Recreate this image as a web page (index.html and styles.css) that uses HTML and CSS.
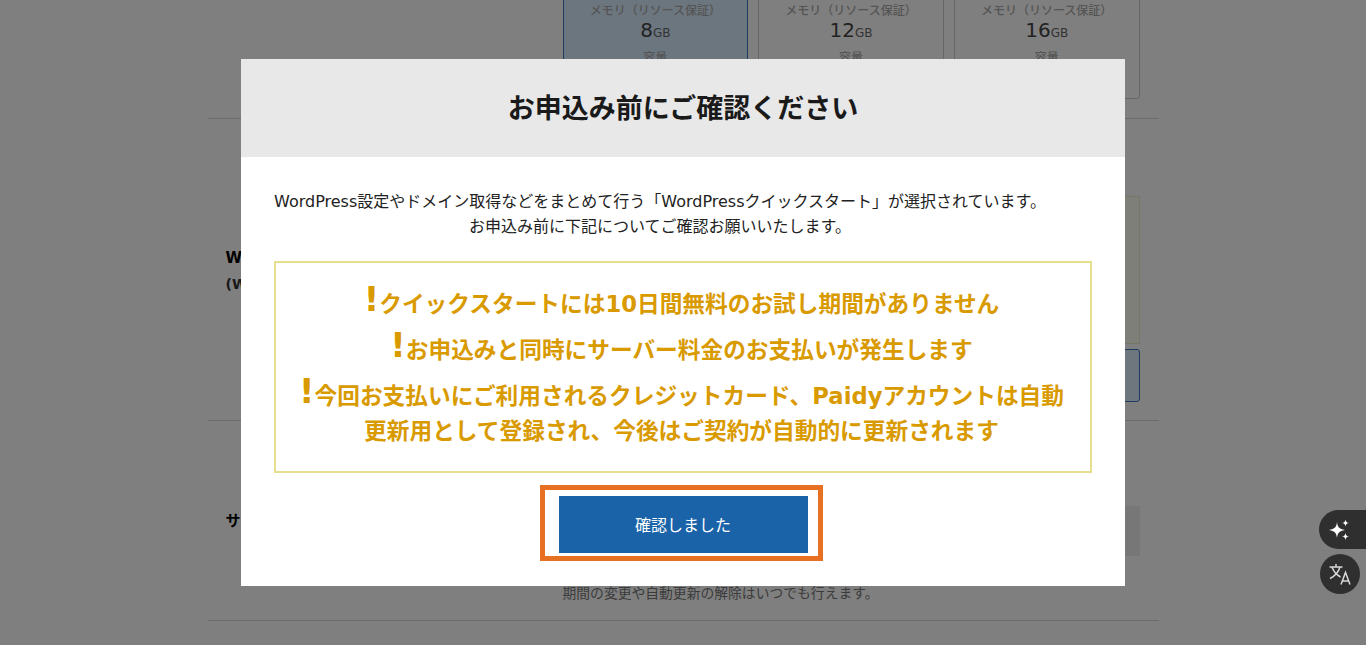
FILE: index.html
```html
<!DOCTYPE html>
<html lang="ja">
  <head>
    <meta charset="UTF-8" />
    <meta name="viewport" content="width=device-width, initial-scale=1.0" />
    <title>お申込み前にご確認ください</title>
    <link rel="stylesheet" href="styles.css">
  </head>
  <body>
    <div class="page">
      <div class="form-row plan-row">
        <div class="row-label"></div>
        <div class="row-field plan-list">
          <div class="plan-card selected">
            <p class="spec-name">メモリ（リソース保証）</p>
            <p class="spec-value">8<small>GB</small></p>
            <p class="spec-name">容量</p>
          </div>
          <div class="plan-card">
            <p class="spec-name">メモリ（リソース保証）</p>
            <p class="spec-value">12<small>GB</small></p>
            <p class="spec-name">容量</p>
          </div>
          <div class="plan-card">
            <p class="spec-name">メモリ（リソース保証）</p>
            <p class="spec-value">16<small>GB</small></p>
            <p class="spec-name">容量</p>
          </div>
        </div>
      </div>

      <div class="form-row quickstart-row">
        <div class="row-label">
          <p>WordPress</p>
          <p class="label-sub">(WordPress)</p>
        </div>
        <div class="row-field">
          <div class="note-box"></div>
          <div class="choice-box"></div>
        </div>
      </div>

      <div class="form-row term-row">
        <div class="row-label">
          <p>サーバーの契約期間</p>
        </div>
        <div class="row-field">
          <div class="select-box"></div>
          <p class="term-note">期間の変更や自動更新の解除はいつでも行えます。</p>
        </div>
      </div>
    </div>

    <div class="overlay">
      <div class="modal">
        <div class="modal-header">
          <h1>お申込み前にご確認ください</h1>
        </div>
        <div class="modal-body">
          <p class="modal-lead">
            WordPress設定やドメイン取得などをまとめて行う「WordPressクイックスタート」が選択されています。<br />
            お申込み前に下記についてご確認お願いいたします。
          </p>
          <div class="alert-box">
            <p><span class="mark">!</span>クイックスタートには10日間無料のお試し期間がありません</p>
            <p><span class="mark">!</span>お申込みと同時にサーバー料金のお支払いが発生します</p>
            <p><span class="mark">!</span>今回お支払いにご利用されるクレジットカード、Paidyアカウントは自動<br />更新用として登録され、今後はご契約が自動的に更新されます</p>
          </div>
          <div class="confirm-frame">
            <button type="button" class="confirm-button">確認しました</button>
          </div>
        </div>
      </div>
    </div>

    <div class="float-tools">
      <div class="tool-pill">
        <svg width="26" height="26" viewBox="0 0 26 26" fill="#fff">
          <path d="M11 5 C11.6 10 13 12 19 13 C13 14 11.6 16 11 21 C10.4 16 9 14 3 13 C9 12 10.4 10 11 5 Z" />
          <path d="M19.5 2.5 C19.9 5 20.6 5.6 23.2 6 C20.6 6.4 19.9 7 19.5 9.5 C19.1 7 18.4 6.4 15.8 6 C18.4 5.6 19.1 5 19.5 2.5 Z" />
          <path d="M19.5 16 C19.9 18.5 20.6 19.1 23.2 19.5 C20.6 19.9 19.9 20.5 19.5 23 C19.1 20.5 18.4 19.9 15.8 19.5 C18.4 19.1 19.1 18.5 19.5 16 Z" />
        </svg>
      </div>
      <div class="tool-circle">
        <svg width="24" height="24" viewBox="0 0 24 24" fill="none" stroke="#d8d8d8" stroke-width="1.5">
          <path d="M1.5 5 H14.5 M8 2 V5 M12 5 C10.5 10 7 14 2 16.5 M4 5 C5.5 9.5 9 13 12.5 15" />
          <path d="M13 22.5 L17.5 10.5 L22 22.5 M14.5 19 H20.5" />
        </svg>
      </div>
    </div>
  </body>
</html>
```

FILE: styles.css
```css
* {
  margin: 0;
  padding: 0;
  box-sizing: border-box;
  font-family: "DejaVu Sans", "Noto Sans CJK JP", sans-serif;
}

body {
  height: 100vh;
  background: #fff;
  overflow: hidden;
}

.page {
  width: 951px;
  margin: -30px auto 0;
}

.form-row {
  display: grid;
  grid-template-columns: 355px 1fr;
  padding: 0 19px 0 18px;
  border-bottom: 1px solid #d8d8d8;
}

.row-label {
  align-self: center;
  font-size: 15px;
  font-weight: 700;
  line-height: 26px;
  color: #000;
  white-space: nowrap;
}

.label-sub {
  font-size: 14px;
  color: #333;
}

.row-field {
  margin-left: -18px;
}

.plan-row {
  height: 149px;
  padding-top: 20px;
}

.plan-list {
  display: grid;
  grid-template-columns: repeat(3, 1fr);
  gap: 10px;
  height: 109px;
}

.plan-card {
  padding-top: 12px;
  text-align: center;
  background: #fff;
  border: 1px solid #ccc;
  border-radius: 3px;
}

.plan-card.selected {
  background: #d9ecff;
  border-color: #3a78c0;
}

.spec-name {
  font-size: 12px;
  line-height: 16px;
  font-weight: 500;
  color: #aaa;
}

.spec-value {
  margin: -1px 0 5px;
  font-size: 20px;
  line-height: 24px;
  color: #444;
}

.spec-value small {
  font-size: 12px;
  color: #666;
}

.quickstart-row {
  height: 302px;
  padding-top: 77px;
}

.quickstart-row .row-label {
  margin-top: -75px;
}

.note-box {
  height: 148px;
  background: #fffff2;
  border: 1px solid #eeeed0;
}

.choice-box {
  height: 53px;
  margin-top: 5px;
  background: #dcecfc;
  border: 1px solid #3a78c0;
  border-radius: 3px;
}

.term-row {
  height: 200px;
  padding-top: 85px;
}

.term-row .row-label {
  margin-top: -85px;
}

.select-box {
  height: 50px;
  background: #eee;
}

.term-note {
  margin-top: 27px;
  font-size: 13.8px;
  line-height: 20px;
  color: #777;
}

.overlay {
  position: fixed;
  inset: 0;
  display: flex;
  justify-content: center;
  align-items: flex-start;
  padding-top: 59px;
  background: rgba(0, 0, 0, 0.5);
}

.modal {
  width: 884px;
  height: 527px;
  background: #fff;
}

.modal-header {
  display: flex;
  align-items: center;
  justify-content: center;
  height: 98px;
  padding-bottom: 4px;
  background: #e8e8e8;
}

.modal-header h1 {
  font-size: 27px;
  font-weight: 700;
  color: #1a1a1a;
}

.modal-body {
  padding: 32px 33px 0;
}

.modal-lead {
  margin-right: 46px;
  font-size: 16px;
  line-height: 25px;
  text-align: center;
  color: #222;
  white-space: nowrap;
}

.alert-box {
  display: flex;
  flex-direction: column;
  gap: 11px;
  height: 212px;
  margin: 22px 0 12px;
  padding: 24px 3px 0 0;
  border: 2px solid #e6e08e;
  font-size: 22.7px;
  font-weight: 700;
  line-height: 35px;
  text-align: center;
  color: #d99a00;
  white-space: nowrap;
}

.mark {
  font-size: 34px;
  line-height: 0;
  vertical-align: 1px;
}

.confirm-frame {
  width: 283px;
  height: 76px;
  margin: 0 auto;
  padding: 6px 0 0 14px;
  border: 5px solid #e87022;
  transform: translateX(-2px);
}

.confirm-button {
  display: block;
  width: 249px;
  height: 57px;
  padding-bottom: 2px;
  background: #1b63a8;
  border: none;
  font-size: 16px;
  color: #fff;
}

.float-tools {
  position: fixed;
  top: 510px;
  right: 0;
  display: flex;
  flex-direction: column;
  align-items: flex-end;
  gap: 5px;
}

.tool-pill {
  display: flex;
  align-items: center;
  width: 47px;
  height: 39px;
  padding-left: 7px;
  background: #2f2f2f;
  border-radius: 20px 0 0 20px;
}

.tool-circle {
  display: flex;
  align-items: center;
  justify-content: center;
  width: 40px;
  height: 40px;
  margin-right: 6px;
  background: #2f2f2f;
  border-radius: 50%;
}
```
